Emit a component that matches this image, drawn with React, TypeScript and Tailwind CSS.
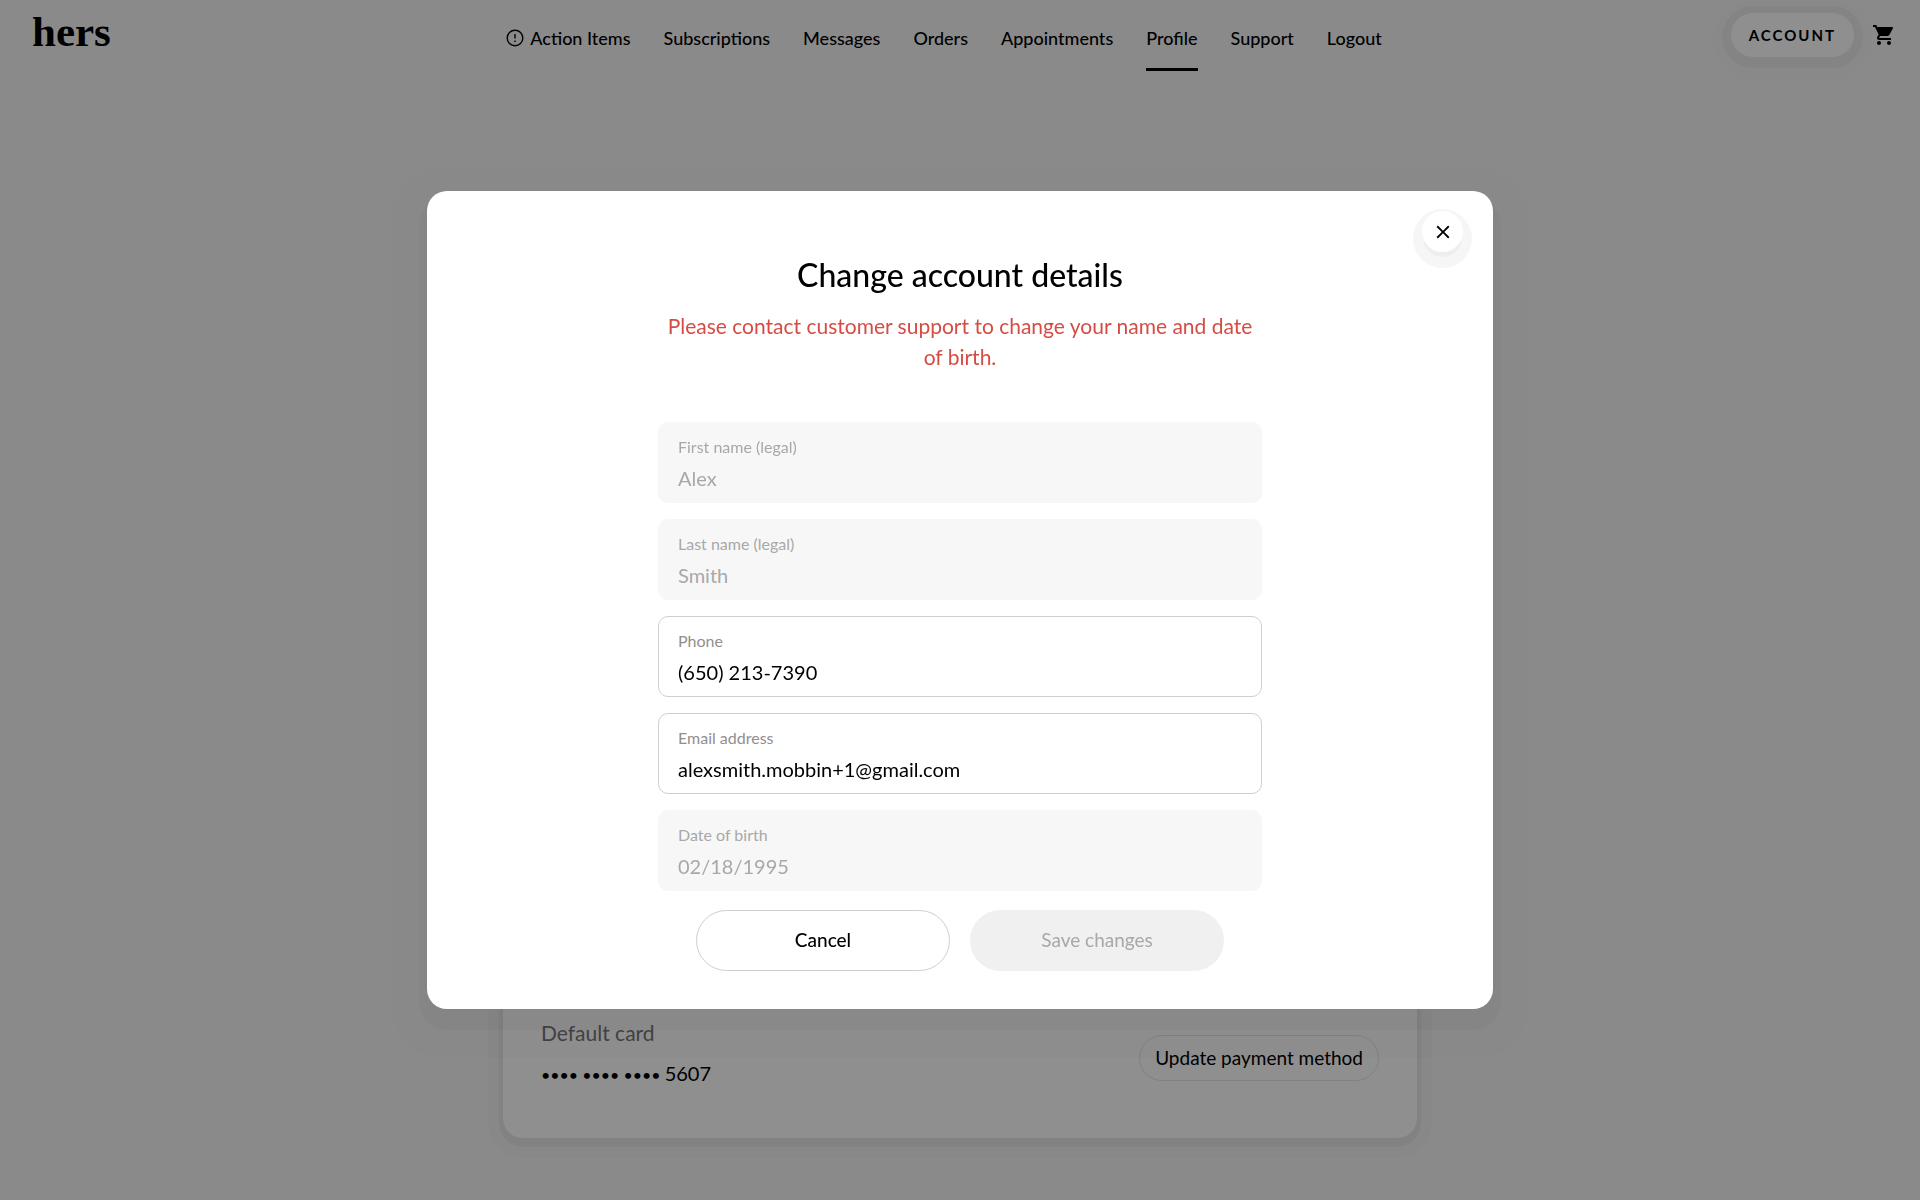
import { useState } from 'react';
import { MdClose, MdShoppingCart } from 'react-icons/md';

interface Field {
  id: string;
  label: string;
  value: string;
  type: string;
  locked: boolean;
}

const NAV_ITEMS = [
  'Action Items',
  'Subscriptions',
  'Messages',
  'Orders',
  'Appointments',
  'Profile',
  'Support',
  'Logout',
];

const FIELDS: Field[] = [
  { id: 'first-name', label: 'First name (legal)', value: 'Alex', type: 'text', locked: true },
  { id: 'last-name', label: 'Last name (legal)', value: 'Smith', type: 'text', locked: true },
  { id: 'phone', label: 'Phone', value: '(650) 213-7390', type: 'tel', locked: false },
  { id: 'email', label: 'Email address', value: 'alexsmith.mobbin+1@gmail.com', type: 'email', locked: false },
  { id: 'dob', label: 'Date of birth', value: '02/18/1995', type: 'text', locked: true },
];

function AlertIcon() {
  return (
    <svg viewBox="0 0 18 18" className="size-[18px]" fill="none" stroke="currentColor" aria-hidden="true">
      <circle cx="9" cy="9" r="7.8" strokeWidth="1.4" />
      <path d="M9 5v4.6M9 11.4v1.7" strokeWidth="1.4" />
    </svg>
  );
}

function Header() {
  return (
    <header className="flex items-start pl-8 pr-6">
      <div className="flex-1">
        <a href="#" className="inline-block pt-2 font-['Liberation_Serif',serif] text-[43px] leading-[48px] font-bold">
          hers
        </a>
      </div>
      <nav className="mr-10 flex gap-[33px] pt-6 text-lg leading-7 font-medium">
        {NAV_ITEMS.map((item) => (
          <a
            key={item}
            href="#"
            className={`flex items-center gap-1.5 border-b-3 pb-4 ${item === 'Profile' ? 'border-black' : 'border-transparent'}`}
          >
            {item === 'Action Items' && <AlertIcon />}
            {item}
          </a>
        ))}
      </nav>
      <div className="flex flex-1 items-center justify-end gap-[18px] pt-[13px]">
        <button
          type="button"
          className="h-11 rounded-full bg-white px-[18px] text-[15px] font-bold tracking-[2px] shadow-[0_2px_0_9px_rgba(0,0,0,0.03),0_5px_0_18px_rgba(0,0,0,0.01)]"
        >
          ACCOUNT
        </button>
        <a href="#" aria-label="Cart">
          <MdShoppingCart className="size-6" />
        </a>
      </div>
    </header>
  );
}

function PaymentCard() {
  return (
    <section className="mx-auto flex w-full max-w-[914px] items-center justify-between rounded-[20px] bg-white px-[38px] pt-28 pb-[41px] shadow-[0_5px_0_4px_rgba(0,0,0,0.04),0_5px_0_15px_rgba(0,0,0,0.02)]">
      <div className="pb-[10px]">
        <p className="text-[21px] leading-7 text-[#767676]">Default card</p>
        <p className="mt-3 text-xl leading-7">
          <span className="text-base">•••• •••• •••• </span>5607
        </p>
      </div>
      <button type="button" className="h-[46px] rounded-full border border-[#e6e6e6] px-[15px] text-[19px]">
        Update payment method
      </button>
    </section>
  );
}

function AccountField({ field }: { field: Field }) {
  const [value, setValue] = useState(field.value);

  return (
    <div
      className={`flex h-[81px] flex-col rounded-[10px] border px-[19px] pt-3 ${
        field.locked ? 'border-[#f7f7f7] bg-[#f7f7f7] text-[#a8a8a8]' : 'border-[#cfcfcf] bg-white text-black'
      }`}
    >
      <label htmlFor={field.id} className={`text-base leading-6 ${field.locked ? 'text-[#a8a8a8]' : 'text-[#8f8f8f]'}`}>
        {field.label}
      </label>
      <input
        id={field.id}
        type={field.type}
        value={value}
        disabled={field.locked}
        onChange={(e) => setValue(e.target.value)}
        className="mt-[3px] h-8 w-full bg-transparent text-xl outline-none"
      />
    </div>
  );
}

function ChangeDetailsModal() {
  return (
    <div className="fixed inset-0 flex items-center justify-center bg-black/44">
      <div
        role="dialog"
        aria-labelledby="dialog-title"
        className="relative w-full max-w-[1066px] rounded-[20px] bg-white px-6 pt-[63px] pb-[38px] shadow-[0_13px_0_8px_rgba(0,0,0,0.03),0_13px_0_36px_rgba(0,0,0,0.02)]"
      >
        <button
          type="button"
          aria-label="Close"
          className="absolute top-5 right-[30px] flex size-[41px] items-center justify-center rounded-full bg-white shadow-[0_6px_0_-1px_#eeeeee,0_7px_0_9px_#f6f6f6]"
        >
          <MdClose className="size-[22px]" />
        </button>
        <form className="mx-auto max-w-[604px]">
          <h1 id="dialog-title" className="text-center text-[32px] leading-[42px] font-medium">
            Change account details
          </h1>
          <p className="mt-[14px] text-center text-[21px] leading-[31px] text-[#d64b43]">
            Please contact customer support to change your name and date of birth.
          </p>
          <div className="mt-[50px] flex flex-col gap-4">
            {FIELDS.map((field) => (
              <AccountField key={field.id} field={field} />
            ))}
          </div>
          <div className="mt-[19px] flex justify-center gap-5 text-[19px]">
            <button type="button" className="h-[61px] w-[254px] rounded-full border border-[#cfcfcf] bg-white font-medium">
              Cancel
            </button>
            <button type="submit" disabled className="h-[61px] w-[254px] rounded-full bg-[#f0f0f0] text-[#a8a8a8]">
              Save changes
            </button>
          </div>
        </form>
      </div>
    </div>
  );
}

export default function App() {
  return (
    <div className="min-h-screen overflow-hidden bg-[#f7f7f7] font-['Lato',sans-serif] text-black">
      <Header />
      <main className="pt-[836px] pb-[59px]">
        <PaymentCard />
      </main>
      <ChangeDetailsModal />
    </div>
  );
}
